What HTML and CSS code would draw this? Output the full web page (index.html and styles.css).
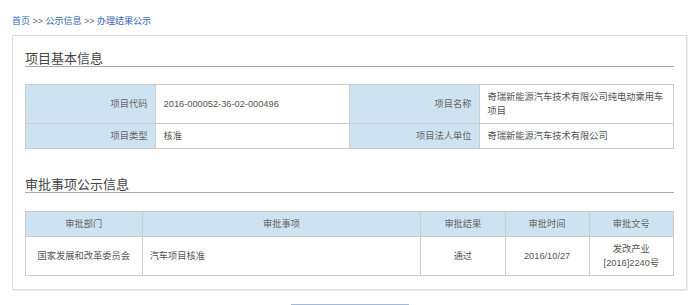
FILE: index.html
```html
<!doctype html>
<html lang="zh-CN">

<head>
    <meta charset="UTF-8">
    <meta name="viewport" content="width=device-width, initial-scale=1.0">
    <title>办理结果公示</title>
    <link rel="stylesheet" href="styles.css">
</head>

<body>
    <div class="crumbs">
        <a href="#">首页</a> &gt;&gt; <a href="#">公示信息</a> &gt;&gt; <a href="#">办理结果公示</a>
    </div>

    <div class="panel">
        <h2 class="section-title">项目基本信息</h2>
        <table class="info-table">
            <colgroup>
                <col style="width: 20%">
                <col style="width: 30%">
                <col style="width: 20%">
                <col style="width: 30%">
            </colgroup>
            <tr>
                <th>项目代码</th>
                <td>2016-000052-36-02-000496</td>
                <th>项目名称</th>
                <td>奇瑞新能源汽车技术有限公司纯电动乘用车项目</td>
            </tr>
            <tr>
                <th>项目类型</th>
                <td>核准</td>
                <th>项目法人单位</th>
                <td>奇瑞新能源汽车技术有限公司</td>
            </tr>
        </table>

        <h2 class="section-title">审批事项公示信息</h2>
        <table class="result-table">
            <colgroup>
                <col style="width: 18%">
                <col style="width: 43%">
                <col style="width: 13%">
                <col style="width: 13%">
                <col style="width: 13%">
            </colgroup>
            <tr>
                <th>审批部门</th>
                <th>审批事项</th>
                <th>审批结果</th>
                <th>审批时间</th>
                <th>审批文号</th>
            </tr>
            <tr>
                <td>国家发展和改革委员会</td>
                <td class="left">汽车项目核准</td>
                <td>通过</td>
                <td>2016/10/27</td>
                <td>发改产业<br>[2016]2240号</td>
            </tr>
        </table>
    </div>

    <div class="actions">
        <button class="back-btn" aria-label="返回"></button>
    </div>
</body>

</html>
```

FILE: styles.css
```css
* {
    font-family: "Liberation Sans", "Noto Sans CJK SC", sans-serif;
    box-sizing: border-box;
}

body {
    background-color: #fff;
    margin: 0;
    padding: 14px 13px 0 12px;
}

.crumbs {
    font-size: 9px;
    line-height: 14px;
    color: #667;
    margin-bottom: 7px;
}

.crumbs a {
    color: #3563b0;
    text-decoration: none;
}

.panel {
    border: 1px solid #ddd;
    box-shadow: 1px 1px 1px #eee;
    padding: 14px 12px 13px;
}

.section-title {
    font-family: "Noto Sans CJK SC", sans-serif;
    font-size: 13px;
    font-weight: normal;
    line-height: 16px;
    color: #444;
    margin: 0 0 17px;
    border-bottom: 1px solid #aaa;
}

table + .section-title {
    margin-top: 27px;
    margin-bottom: 18px;
}

table {
    width: 100%;
    border-collapse: collapse;
    table-layout: fixed;
    font-size: 9.25px;
    line-height: 14px;
    color: #555;
}

th,
td {
    border: 1px solid #ccc;
    padding: 5px 7px;
    font-weight: normal;
}

.info-table th {
    background-color: #cde3f1;
    text-align: right;
    color: #666;
}

.info-table td {
    text-align: left;
    padding-left: 8px;
    padding-right: 4px;
}

.result-table th {
    background-color: #cde3f1;
    text-align: center;
    color: #666;
}

.result-table td {
    text-align: center;
}

.result-table td.left {
    text-align: left;
}

.actions {
    display: flex;
    justify-content: center;
    margin-top: 14px;
}

.back-btn {
    width: 118px;
    height: 30px;
    border: 1px solid #a5b9d6;
    background: #e9f0f8;
}
```
